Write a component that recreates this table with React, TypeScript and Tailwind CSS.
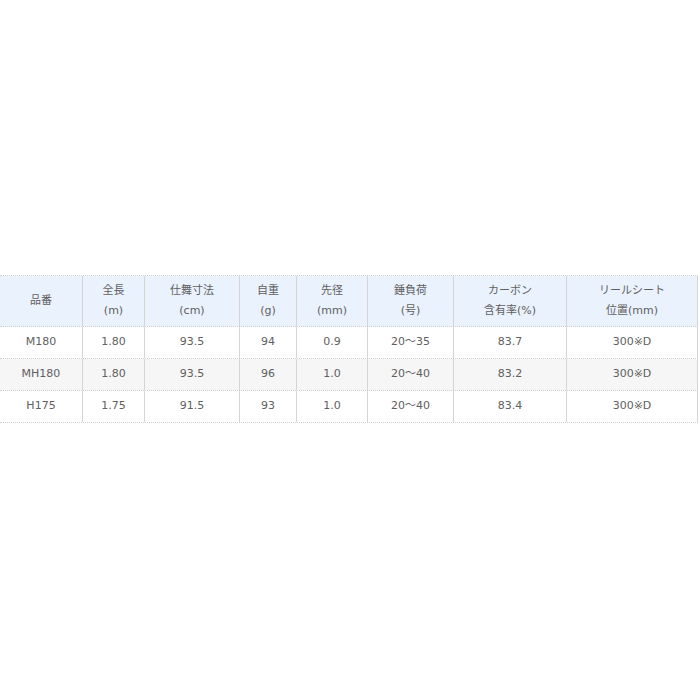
import React from "react";

const COLS = "grid-cols-[83px_62px_95px_57px_71px_86px_113px_131px]";

const HEAD: string[][] = [
  ["品番"],
  ["全長", "(m)"],
  ["仕舞寸法", "(cm)"],
  ["自重", "(g)"],
  ["先径", "(mm)"],
  ["錘負荷", "(号)"],
  ["カーボン", "含有率(%)"],
  ["リールシート", "位置(mm)"],
];

const ROWS: string[][] = [
  ["M180", "1.80", "93.5", "94", "0.9", "20～35", "83.7", "300※D"],
  ["MH180", "1.80", "93.5", "96", "1.0", "20～40", "83.2", "300※D"],
  ["H175", "1.75", "91.5", "93", "1.0", "20～40", "83.4", "300※D"],
];

const font = { fontFamily: '"DejaVu Sans", "Noto Sans CJK JP", sans-serif' };

export default function App() {
  return (
    <div className="h-[700px] w-[700px] bg-white pt-[275px] text-[#606060] text-[11px]" style={font}>
      <div className="w-[698px] border-t border-dotted border-[#cfcfcf]">
        <div className={`grid ${COLS} h-[51px] bg-[#eaf2fd] border-b border-dotted border-[#cfcfcf]`}>
          {HEAD.map((h, i) => (
            <div
              key={i}
              className="flex flex-col items-center justify-center leading-[20px] border-r border-solid border-[#d4d4d4]"
            >
              {h.map((t) => (
                <span key={t}>{t}</span>
              ))}
            </div>
          ))}
        </div>
        {ROWS.map((r, ri) => (
          <div
            key={ri}
            className={`grid ${COLS} h-[32px] border-b border-dotted border-[#cfcfcf] ${ri === 1 ? "bg-[#f6f6f6]" : "bg-white"}`}
          >
            {r.map((c, ci) => (
              <div key={ci} className="flex items-center justify-center border-r border-solid border-[#d4d4d4]">
                {c}
              </div>
            ))}
          </div>
        ))}
      </div>
    </div>
  );
}
